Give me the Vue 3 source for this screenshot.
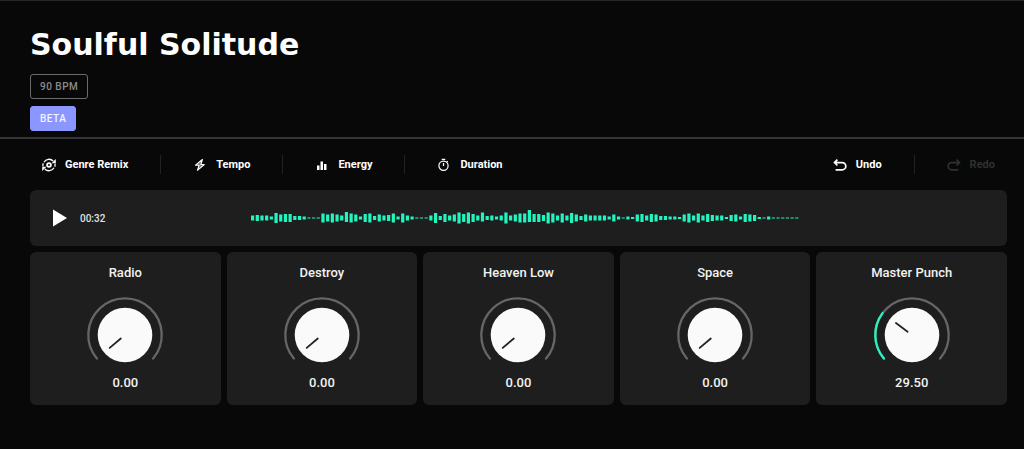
<script setup>
import { ref, reactive } from 'vue'

const title = 'Soulful Solitude'
const isPlaying = ref(false)

const tools = [
  { id: 'remix', label: 'Genre Remix' },
  { id: 'tempo', label: 'Tempo' },
  { id: 'energy', label: 'Energy' },
  { id: 'duration', label: 'Duration' }
]

const knobs = reactive([
  { id: 'radio', label: 'Radio', value: 0 },
  { id: 'destroy', label: 'Destroy', value: 0 },
  { id: 'heaven-low', label: 'Heaven Low', value: 0 },
  { id: 'space', label: 'Space', value: 0 },
  { id: 'master-punch', label: 'Master Punch', value: 29.5 }
])

const levels = [
  5, 6, 5, 5, 3, 10, 7, 8, 8, 4, 4, 3, 1, 1, 1, 9, 7, 9, 7, 5,
  10, 9, 7, 3, 8, 9, 4, 7, 5, 6, 9, 3, 9, 5, 3, 1, 1, 1, 5, 10,
  4, 8, 5, 7, 11, 8, 11, 8, 5, 9, 4, 5, 3, 5, 11, 5, 7, 9, 9, 12,
  8, 8, 6, 11, 9, 5, 9, 5, 10, 7, 4, 7, 5, 5, 5, 5, 3, 7, 3, 1,
  3, 2, 7, 8, 5, 8, 7, 4, 4, 3, 3, 2, 7, 9, 5, 9, 5, 8, 6, 5,
  5, 2, 6, 7, 3, 8, 7, 6, 2, 1, 3, 1, 1, 1, 1, 1, 1
]

// peaks that reach further above the centre line than below it
const lifts = { 20: 1, 49: 1, 59: 2 }

const bars = levels.map((h, i) => ({
  x: i * 4.7,
  y: 8 - h / 2 - (lifts[i] || 0),
  h
}))

// the dial sweeps 260 degrees, starting at the lower left
const START = 140
const SWEEP = 260

const angleOf = (value) => START + (value / 100) * SWEEP

const point = (deg, r) => {
  const a = (deg * Math.PI) / 180
  return `${(40 + r * Math.cos(a)).toFixed(2)} ${(40 + r * Math.sin(a)).toFixed(2)}`
}

const arc = (value) => {
  const large = (value / 100) * SWEEP > 180 ? 1 : 0
  return `M${point(START, 36.7)}A36.7 36.7 0 ${large} 1 ${point(angleOf(value), 36.7)}`
}

const pointer = (value) => `M${point(angleOf(value), 5.5)}L${point(angleOf(value), 20)}`
</script>

<template>
  <main class="studio">
    <header class="track-header">
      <h1>{{ title }}</h1>
      <div class="tags">
        <span class="tag">90 BPM</span>
        <span class="tag tag-beta">BETA</span>
      </div>
    </header>

    <nav class="toolbar">
      <div class="tool-group">
        <button v-for="tool in tools" :key="tool.id" type="button" class="tool">
          <svg v-if="tool.id === 'remix'" class="icon" viewBox="0 0 14 14">
            <path d="M2 4.2A5.8 5.8 0 0 1 11.2 3M12 9.8A5.8 5.8 0 0 1 2.8 11M1 8.3A6 6 0 0 1 1.2 5.3M13 5.7A6 6 0 0 1 12.8 8.7" fill="none" stroke="currentColor" stroke-width="1.3" />
            <path d="M13.8 1v4.2H9.6zM.2 13V8.8h4.2z" fill="currentColor" />
            <circle cx="7" cy="7" r="1.9" fill="none" stroke="currentColor" stroke-width="1.8" />
          </svg>
          <svg v-else-if="tool.id === 'tempo'" class="icon" viewBox="0 0 14 14">
            <path d="M9.4 1.5 2.5 7.2h3.6L4.4 12.3 11.3 6.5H7.9z" fill="currentColor" fill-opacity="0.45" stroke="currentColor" stroke-width="1.1" stroke-linejoin="round" />
          </svg>
          <svg v-else-if="tool.id === 'energy'" class="icon" viewBox="0 0 14 14">
            <path d="M2 7.5h2.5V12H2zM5.5 3.5H8V12H5.5zM9 6h2.5v6H9z" fill="currentColor" />
          </svg>
          <svg v-else class="icon" viewBox="0 0 14 14" fill="none" stroke="currentColor" stroke-width="1.2">
            <circle cx="6.5" cy="7.7" r="4.6" />
            <path d="M4.7 1.3h3.6M6.5 5v3M9.8 4.2l1-1" />
          </svg>
          {{ tool.label }}
        </button>
      </div>
      <div class="tool-group">
        <button type="button" class="tool">
          <svg class="icon" viewBox="0 0 14 14" fill="none" stroke="currentColor" stroke-width="1.7">
            <path d="M4.4 1.7 1.5 4.6l2.9 2.9M1.6 4.6h7.6a3.6 3.6 0 0 1 0 7.2H2.6" />
          </svg>
          Undo
        </button>
        <button type="button" class="tool" disabled>
          <svg class="icon" viewBox="0 0 14 14" fill="none" stroke="currentColor" stroke-width="1.7">
            <path d="m9.6 1.7 2.9 2.9-2.9 2.9M12.4 4.6H4.8a3.6 3.6 0 0 0 0 7.2h6.6" />
          </svg>
          Redo
        </button>
      </div>
    </nav>

    <div class="panels">
      <section class="player">
        <button type="button" class="play-btn" :aria-pressed="isPlaying" aria-label="Play" @click="isPlaying = !isPlaying">
          <svg viewBox="0 0 14 18"><path d="M0 0.5 14 9 0 17.5z" fill="#fff" /></svg>
        </button>
        <time class="time">00:32</time>
        <svg class="waveform" viewBox="0 0 549 16" preserveAspectRatio="none">
          <rect v-for="(bar, i) in bars" :key="i" :x="bar.x" :y="bar.y" width="3.2" :height="bar.h" />
        </svg>
      </section>

      <section class="knobs">
        <div v-for="knob in knobs" :key="knob.id" class="knob-card">
          <label :for="knob.id">{{ knob.label }}</label>
          <div class="knob">
            <svg viewBox="0 0 80 80">
              <path :d="arc(100)" class="knob-track" />
              <path v-if="knob.value > 0" :d="arc(knob.value)" class="knob-fill" />
              <circle cx="40" cy="40" r="27.3" fill="#fafafa" />
              <path :d="pointer(knob.value)" class="knob-pointer" />
            </svg>
            <input :id="knob.id" v-model.number="knob.value" type="range" min="0" max="100" step="0.5">
          </div>
          <output :for="knob.id">{{ knob.value.toFixed(2) }}</output>
        </div>
      </section>
    </div>
  </main>
</template>

<style>
body {
  background: #080808;
}
</style>

<style scoped>
.studio {
  box-sizing: border-box;
  min-height: 100vh;
  border-top: 1px solid #262626;
  background: #080808;
  color: #fff;
  font-family: Roboto, "Liberation Sans", sans-serif;
}

button {
  border: none;
  background: transparent;
  color: inherit;
  font-family: inherit;
  cursor: pointer;
}

.track-header {
  padding: 26px 30px 6px;
  border-bottom: 2px solid #363636;
}

h1 {
  margin: 0 0 11px;
  font-family: "DejaVu Sans", sans-serif;
  font-size: 30px;
  font-weight: 700;
  line-height: 36px;
}

.tags {
  display: flex;
  flex-direction: column;
  align-items: flex-start;
  gap: 7px;
}

.tag {
  box-sizing: border-box;
  padding: 0 9px;
  border: 1px solid #6b6b6b;
  border-radius: 3px;
  color: #8c8c8c;
  font-size: 10px;
  font-weight: 500;
  letter-spacing: 0.5px;
  line-height: 23px;
}

.tag-beta {
  border-color: #8b97ff;
  background: #8b97ff;
  color: #f4f5ff;
}

.toolbar {
  display: flex;
  align-items: center;
  justify-content: space-between;
  height: 51px;
  padding: 0 17px 0 30px;
}

.tool-group {
  display: flex;
}

.tool {
  display: flex;
  align-items: center;
  gap: 9px;
  padding: 0 32px;
  font-size: 11px;
  font-weight: 700;
  line-height: 19px;
}

.tool + .tool {
  border-left: 1px solid #222;
}

.tool:first-child {
  padding-left: 12px;
}

.tool:last-child {
  padding-right: 12px;
}

.tool:disabled {
  color: #303030;
  cursor: default;
}

.icon {
  width: 14px;
  height: 14px;
}

.panels {
  display: flex;
  flex-direction: column;
  gap: 6px;
  padding: 0 17px 0 30px;
}

.player {
  display: flex;
  align-items: center;
  height: 56px;
  padding: 0 208px 0 23px;
  border-radius: 6px;
  background: #1e1e1e;
}

.play-btn {
  display: flex;
  padding: 0;
}

.play-btn svg {
  width: 14px;
  height: 18px;
}

.time {
  flex: 0 0 171px;
  margin-left: 13px;
  color: #e0e0e0;
  font-size: 10px;
  font-weight: 500;
}

.waveform {
  flex: 1;
  min-width: 0;
  height: 16px;
  fill: #22f5c0;
}

.knobs {
  display: grid;
  grid-template-columns: repeat(5, 1fr);
  gap: 6px;
}

.knob-card {
  display: flex;
  flex-direction: column;
  align-items: center;
  padding: 11px 8px 14px;
  border-radius: 6px;
  background: #1e1e1e;
  color: #f2f2f2;
  font-size: 13px;
  font-weight: 500;
}

.knob-card label {
  margin-bottom: 12px;
  line-height: 20px;
}

.knob-card output {
  line-height: 16px;
}

.knob {
  position: relative;
  width: 80px;
  height: 80px;
}

.knob svg {
  display: block;
}

.knob input {
  position: absolute;
  inset: 0;
  width: 100%;
  height: 100%;
  margin: 0;
  opacity: 0;
  cursor: pointer;
}

.knob-track,
.knob-fill,
.knob-pointer {
  fill: none;
  stroke: #666;
  stroke-width: 2.3;
  stroke-linecap: round;
}

.knob-fill {
  stroke: #22f5c0;
}

.knob-pointer {
  stroke: #222;
  stroke-width: 1.8;
}
</style>
